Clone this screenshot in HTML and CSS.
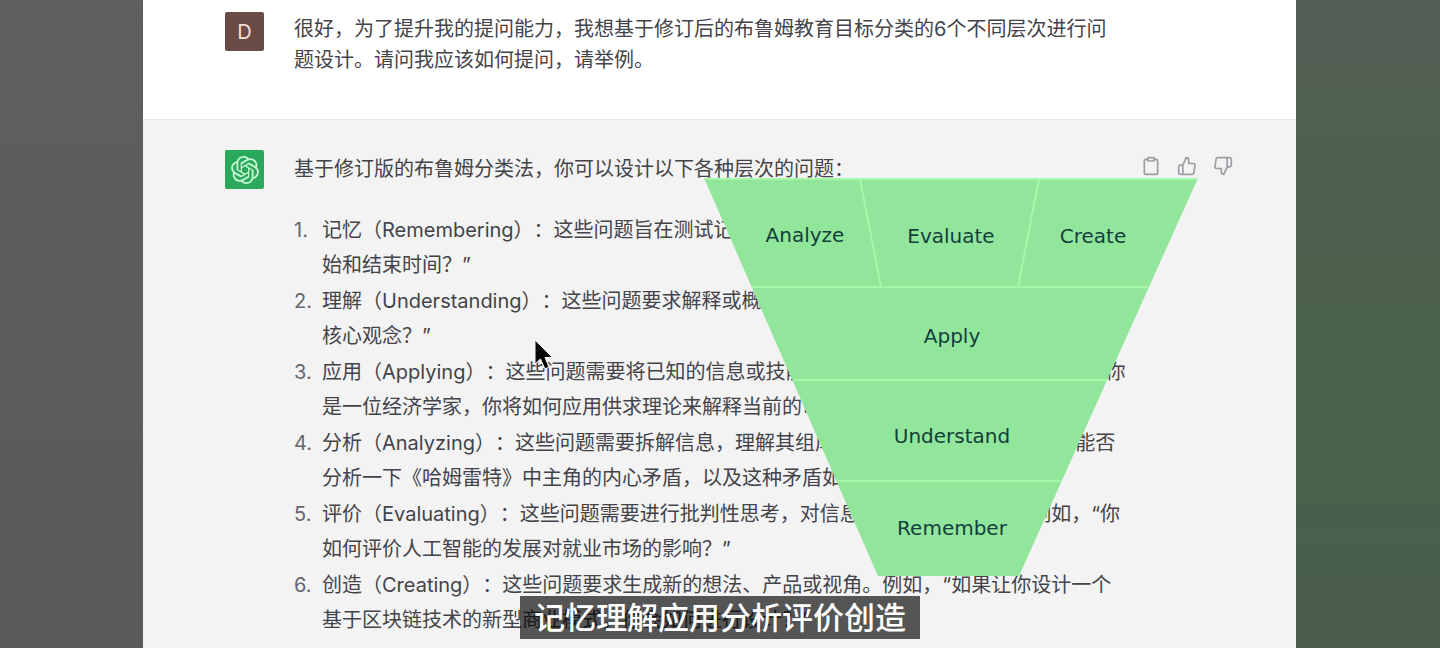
FILE: index.html
```html
<!DOCTYPE html>
<html lang="zh-CN">
<head>
<meta charset="utf-8">
<title>布鲁姆分类法提问</title>
<link rel="stylesheet" href="styles.css">
</head>
<body>
<div class="stage">
  <main class="chat">
    <section class="message message-user">
      <div class="avatar avatar-user">D</div>
      <div class="content">
        <p class="text">很好，为了提升我的提问能力，我想基于修订后的布鲁姆教育目标分类的6个不同层次进行问<br>题设计。请问我应该如何提问，请举例。</p>
      </div>
    </section>
    <section class="message message-assistant">
      <div class="avatar avatar-assistant">
        <svg class="logo" viewBox="0 0 24 24" aria-hidden="true"><path d="M22.2819 9.8211a5.9847 5.9847 0 0 0-.5157-4.9108 6.0462 6.0462 0 0 0-6.5098-2.9A6.0651 6.0651 0 0 0 4.9807 4.1818a5.9847 5.9847 0 0 0-3.9977 2.9 6.0462 6.0462 0 0 0 .7427 7.0966 5.98 5.98 0 0 0 .511 4.9107 6.051 6.051 0 0 0 6.5146 2.9001A5.9847 5.9847 0 0 0 13.2599 24a6.0557 6.0557 0 0 0 5.7718-4.2058 5.9894 5.9894 0 0 0 3.9977-2.9001 6.0557 6.0557 0 0 0-.7475-7.0729zm-9.022 12.6081a4.4755 4.4755 0 0 1-2.8764-1.0408l.1419-.0804 4.7783-2.7582a.7948.7948 0 0 0 .3927-.6813v-6.7369l2.02 1.1686a.071.071 0 0 1 .038.052v5.5826a4.504 4.504 0 0 1-4.4945 4.4944zm-9.6607-4.1254a4.4708 4.4708 0 0 1-.5346-3.0137l.142.0852 4.783 2.7582a.7712.7712 0 0 0 .7806 0l5.8428-3.3685v2.3324a.0804.0804 0 0 1-.0332.0615L9.74 19.9502a4.4992 4.4992 0 0 1-6.1408-1.6464zM2.3408 7.8956a4.485 4.485 0 0 1 2.3655-1.9728V11.6a.7664.7664 0 0 0 .3879.6765l5.8144 3.3543-2.0201 1.1685a.0757.0757 0 0 1-.071 0l-4.8303-2.7865A4.504 4.504 0 0 1 2.3408 7.872zm16.5963 3.8558L13.1038 8.364 15.1192 7.2a.0757.0757 0 0 1 .071 0l4.8303 2.7913a4.4944 4.4944 0 0 1-.6765 8.1042v-5.6772a.79.79 0 0 0-.407-.667zm2.0107-3.0231l-.142-.0852-4.7735-2.7818a.7759.7759 0 0 0-.7854 0L9.409 9.2297V6.8974a.0662.0662 0 0 1 .0284-.0615l4.8303-2.7866a4.4992 4.4992 0 0 1 6.6802 4.66zM8.3065 12.863l-2.02-1.1638a.0804.0804 0 0 1-.038-.0567V6.0742a4.4992 4.4992 0 0 1 7.3757-3.4537l-.142.0805L8.704 5.459a.7948.7948 0 0 0-.3927.6813zm1.0976-2.3654l2.602-1.4998 2.6069 1.4998v2.9994l-2.5974 1.4997-2.6067-1.4997Z"/></svg>
      </div>
      <div class="content">
        <p class="text">基于修订版的布鲁姆分类法，你可以设计以下各种层次的问题：</p>
        <ol class="levels">
          <li><span>记忆（Remembering）：这些问题旨在测试记忆能力。例如，“二战的开<br>始和结束时间？”</span></li>
          <li><span>理解（Understanding）：这些问题要求解释或概括信息。例如，“它的<br>核心观念？”</span></li>
          <li><span>应用（Applying）：这些问题需要将已知的信息或技能, 应用到新的情境中。例如，“假设你<br>是一位经济学家，你将如何应用供求理论来解释当前的市场走势？”</span></li>
          <li><span>分析（Analyzing）：这些问题需要拆解信息，理解其组成部分, 以及关系。例如，“你能否<br>分析一下《哈姆雷特》中主角的内心矛盾，以及这种矛盾如何影响？”</span></li>
          <li><span>评价（Evaluating）：这些问题需要进行批判性思考，对信息作出评估, 和判断。例如，“你<br>如何评价人工智能的发展对就业市场的影响？”</span></li>
          <li><span>创造（Creating）：这些问题要求生成新的想法、产品或视角。例如，“如果让你设计一个<br>基于区块链技术的新型商业模式，你会如何进行设计？”</span></li>
        </ol>
      </div>
      <div class="actions">
        <button class="action" type="button" aria-label="复制"><svg viewBox="0 0 24 24"><path d="M16 4h2a2 2 0 0 1 2 2v14a2 2 0 0 1-2 2H6a2 2 0 0 1-2-2V6a2 2 0 0 1 2-2h2"/><rect x="8" y="2" width="8" height="4" rx="1"/></svg></button>
        <button class="action" type="button" aria-label="赞"><svg viewBox="0 0 24 24"><path d="M14 9V5a3 3 0 0 0-3-3l-4 9v11h11.28a2 2 0 0 0 2-1.7l1.38-9a2 2 0 0 0-2-2.3zM7 22H4a2 2 0 0 1-2-2v-7a2 2 0 0 1 2-2h3"/></svg></button>
        <button class="action" type="button" aria-label="踩"><svg viewBox="0 0 24 24"><path d="M10 15v4a3 3 0 0 0 3 3l4-9V2H5.72a2 2 0 0 0-2 1.7l-1.38 9a2 2 0 0 0 2 2.3zm7-13h2.67A2.31 2.31 0 0 1 22 4v7a2.31 2.31 0 0 1-2.33 2H17"/></svg></button>
      </div>
      <svg class="pyramid" viewBox="704 178 494 398" role="img" aria-label="布鲁姆分类法层次图">
        <path class="pyramid-body" d="M704 178H1198L1019 576H878Z"/>
        <path class="pyramid-lines" d="M705 179H1197M752 287H1149M793 380H1107M838 481H1061M860 179L881 287M1039 179L1018 287"/>
        <g class="pyramid-labels">
          <text x="805" y="242">Analyze</text>
          <text x="951" y="243">Evaluate</text>
          <text x="1093" y="243">Create</text>
          <text x="952" y="343">Apply</text>
          <text x="952" y="443">Understand</text>
          <text x="952" y="535">Remember</text>
        </g>
      </svg>
      <svg class="cursor" viewBox="0 0 22 34" aria-hidden="true"><path d="M2 2V26L7.500 21L12 31L16 29L12 19.500H19.500Z"/></svg>
    </section>
  </main>
  <div class="caption">记忆理解应用分析评价创造</div>
</div>
</body>
</html>
```
FILE: styles.css
```css
* {
  box-sizing: border-box;
}

body {
  margin: 0;
  font-family: Inter, "Noto Sans CJK SC", sans-serif;
  font-size: 20px;
  color: #434349;
  text-spacing-trim: space-all;
}

.stage {
  position: relative;
  display: flex;
  height: 100vh;
  padding: 0 144px 0 143px;
  overflow: hidden;
  background:
    linear-gradient(#565f57, #4e6050 20%, #4b604b 50%, #49604b 75%, #4b5c4e) right / 144px 100% no-repeat,
    linear-gradient(#5e5f5e, #5b5c5b 50%, #595a59);
}

.chat {
  display: flex;
  flex: 1;
  flex-direction: column;
  min-width: 0;
  background: #f3f3f3;
}

.message {
  position: relative;
  display: flex;
  align-items: flex-start;
  gap: 30px;
  padding: 12px 63px 0 82px;
}

.message-user {
  padding-bottom: 43px;
  background: #fff;
  border-bottom: 1px solid #e6e6e6;
}

.message-assistant {
  flex: 1;
  padding-top: 30px;
}

.avatar {
  display: flex;
  flex: none;
  align-items: center;
  justify-content: center;
  width: 39px;
  height: 39px;
  border-radius: 2px;
}

.avatar-user {
  background: #6b4b46;
  color: #f3dfda;
}

.avatar-assistant {
  background: #2aa95d;
}

.logo {
  width: 28px;
  height: 28px;
  fill: #c4f7d2;
}

.content {
  flex: 1;
  min-width: 0;
  white-space: nowrap;
}

.text {
  margin: 0;
  padding-top: 2px;
  line-height: 31px;
}

.message-assistant .text {
  padding-top: 4px;
}

.levels {
  display: grid;
  gap: 1px;
  margin: 28px 0 0;
  padding: 0;
  list-style: none;
  counter-reset: level;
  line-height: 35px;
}

.levels li {
  display: grid;
  grid-template-columns: 28px 1fr;
  counter-increment: level;
}

.levels li::before {
  content: counter(level) ".";
  color: #65656d;
}

.actions {
  display: flex;
  gap: 16px;
  padding-top: 6px;
}

.action {
  display: flex;
  padding: 0;
  border: 0;
  background: none;
}

.action svg {
  width: 20px;
  height: 20px;
  fill: none;
  stroke: #9c9ca3;
  stroke-width: 2;
  stroke-linecap: round;
  stroke-linejoin: round;
}

.pyramid {
  position: absolute;
  top: 58px;
  left: 561px;
  width: 494px;
}

.pyramid-body {
  fill: #92e69b;
}

.pyramid-lines {
  fill: none;
  stroke: #a6f8a8;
  stroke-width: 2;
}

.pyramid-labels {
  fill: #123f3b;
  font-family: "DejaVu Sans", sans-serif;
  font-size: 20px;
  text-anchor: middle;
}

.cursor {
  position: absolute;
  top: 218px;
  left: 390px;
  width: 22px;
  fill: #050505;
  stroke: #f8f8f8;
  stroke-width: 1;
}

.caption {
  position: absolute;
  bottom: 9px;
  left: 50%;
  padding: 0 14px;
  background: rgba(0, 0, 0, 0.65);
  color: #fff;
  font-size: 31px;
  font-weight: 500;
  line-height: 43px;
  white-space: nowrap;
  transform: translateX(-50%);
}
```
